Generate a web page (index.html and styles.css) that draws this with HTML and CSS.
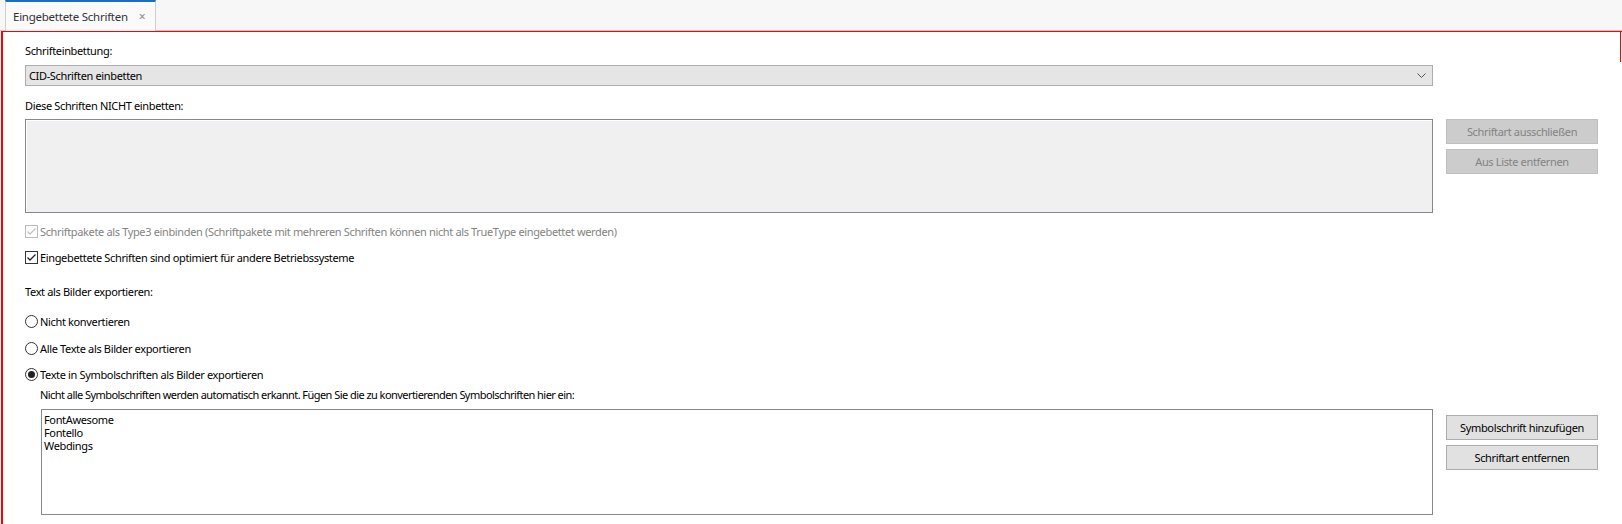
FILE: index.html
```html
<!DOCTYPE html>
<html lang="de">
<head>
<meta charset="utf-8">
<title>Eingebettete Schriften</title>
<link rel="stylesheet" href="styles.css">
</head>
<body>
<div class="tabstrip">
  <div class="tab">
    <span class="tab-title">Eingebettete Schriften</span>
    <span class="tab-close">&#215;</span>
  </div>
</div>
<div class="panel">
  <div class="label first">Schrifteinbettung:</div>
  <div class="select">
    <span>CID-Schriften einbetten</span>
    <svg class="chev" width="9" height="5" viewBox="0 0 9 5"><path d="M0.5 0.5 L4.5 4.5 L8.5 0.5" fill="none" stroke="#555" stroke-width="1"/></svg>
  </div>
  <div class="label gap13">Diese Schriften NICHT einbetten:</div>
  <div class="grid row-list1">
    <div class="listbox disabled"></div>
    <div class="btns">
      <button class="btn" disabled>Schriftart ausschließen</button>
      <button class="btn" disabled>Aus Liste entfernen</button>
    </div>
  </div>
  <div class="check-row disabled-row cb1">
    <span class="box box-disabled">
      <svg width="11" height="11" viewBox="0 0 11 11"><path d="M1.5 5.5 L4 8 L9.5 2.5" fill="none" stroke="#c4c4c4" stroke-width="1.3"/></svg>
    </span>
    <span>Schriftpakete als Type3 einbinden (Schriftpakete mit mehreren Schriften können nicht als TrueType eingebettet werden)</span>
  </div>
  <div class="check-row cb2">
    <span class="box">
      <svg width="11" height="11" viewBox="0 0 11 11"><path d="M1.5 5.5 L4 8 L9.5 2.5" fill="none" stroke="#222" stroke-width="1.3"/></svg>
    </span>
    <span>Eingebettete Schriften sind optimiert für andere Betriebssysteme</span>
  </div>
  <div class="label lbl3">Text als Bilder exportieren:</div>
  <div class="check-row r1"><span class="radio"></span><span>Nicht konvertieren</span></div>
  <div class="check-row r2"><span class="radio"></span><span>Alle Texte als Bilder exportieren</span></div>
  <div class="check-row r3"><span class="radio on"></span><span>Texte in Symbolschriften als Bilder exportieren</span></div>
  <div class="label hint">Nicht alle Symbolschriften werden automatisch erkannt. Fügen Sie die zu konvertierenden Symbolschriften hier ein:</div>
  <div class="grid2">
    <div class="listbox white">
      <div class="item">FontAwesome</div>
      <div class="item">Fontello</div>
      <div class="item">Webdings</div>
    </div>
    <div class="btns btns2">
      <button class="btn enabled">Symbolschrift hinzufügen</button>
      <button class="btn enabled">Schriftart entfernen</button>
    </div>
  </div>
</div>
</body>
</html>
```

FILE: styles.css
```css
* { box-sizing: border-box; }
html, body { margin: 0; padding: 0; background: #fff; }
body {
  font-family: "Noto Sans", "Open Sans", sans-serif;
  font-size: 11px;
  letter-spacing: -0.35px;
  color: #000;
  width: 1622px;
  height: 524px;
  overflow: hidden;
}
.tabstrip {
  height: 31px;
  background: #f7f7f7;
  border-bottom: 1px solid #c9c9c9;
  display: flex;
  padding-left: 5px;
}
.tab {
  width: 151px;
  height: 31px;
  background: #fafafa;
  border-top: 2px solid #1a6ec2;
  border-left: 1px solid #cfcfcf;
  border-right: 1px solid #cfcfcf;
  display: flex;
  align-items: center;
  padding-left: 7px;
  padding-bottom: 1px;
  color: #333;
  font-size: 11.5px;
  letter-spacing: -0.25px;
}
.tab-title { flex: none; }
.tab-close { margin-left: 11px; color: #888; font-size: 12px; }
.panel {
  position: relative;
  margin-left: 1px;
  height: 493px;
  border-top: 1px solid #ff0000;
  border-left: 2px solid #ff0000;
  padding-left: 22px;
  padding-top: 12px;
}
.panel::after {
  content: "";
  position: absolute;
  right: 1px;
  top: 0;
  width: 1px;
  height: 30px;
  background: #ff0000;
}
.label { height: 14px; line-height: 14px; white-space: nowrap; }
.select {
  margin-top: 7px;
  width: 1408px;
  height: 21px;
  background: #e5e5e5;
  border: 1px solid #adadad;
  display: flex;
  align-items: center;
  justify-content: space-between;
  padding: 0 6px 0 3px;
}
.chev { display: block; }
.gap13 { margin-top: 13px; }
.grid {
  margin-top: 6px;
  display: grid;
  grid-template-columns: 1408px 152px;
  column-gap: 13px;
}
.listbox {
  height: 94px;
  border: 1px solid #828790;
}
.listbox.disabled {
  background: #f0f0f0;
  box-shadow: inset 1px 1px 0 #fff;
}
.btns { display: flex; flex-direction: column; gap: 5px; }
.btn {
  width: 152px;
  height: 25px;
  font-family: inherit;
  font-size: 11px;
  letter-spacing: -0.35px;
  padding: 0;
  margin: 0;
}
.btn[disabled] {
  background: #cccccc;
  border: 1px solid #bfbfbf;
  color: #838383;
}
.btn.enabled {
  background: #e1e1e1;
  border: 1px solid #adadad;
  color: #000;
}
.check-row {
  display: flex;
  align-items: center;
  height: 16px;
  white-space: nowrap;
}
.disabled-row { color: #838383; }
.box {
  width: 13px;
  height: 13px;
  border: 1px solid #333;
  background: #fff;
  margin-right: 2px;
  display: flex;
  align-items: center;
  justify-content: center;
  flex: none;
}
.box svg { display: block; }
.box-disabled { border-color: #bcbcbc; }
.cb1 { margin-top: 10px; }
.cb2 { margin-top: 10px; }
.lbl3 { margin-top: 20px; }
.radio {
  width: 13px;
  height: 13px;
  border: 1px solid #333;
  border-radius: 50%;
  background: #fff;
  margin-right: 2px;
  flex: none;
  display: flex;
  align-items: center;
  justify-content: center;
}
.radio.on::after {
  content: "";
  width: 7px;
  height: 7px;
  border-radius: 50%;
  background: #222;
}
.r1 { margin-top: 14px; }
.r2 { margin-top: 11px; }
.r3 { margin-top: 10px; }
.hint { margin-top: 6px; padding-left: 15px; letter-spacing: -0.55px; }
.grid2 {
  margin-top: 7px;
  padding-left: 16px;
  display: grid;
  grid-template-columns: 1392px 152px;
  column-gap: 13px;
}
.listbox.white {
  height: 106px;
  background: #fff;
  padding: 3px 2px;
}
.item { height: 13px; line-height: 13px; }
.btns2 { margin-top: 6px; }
```
